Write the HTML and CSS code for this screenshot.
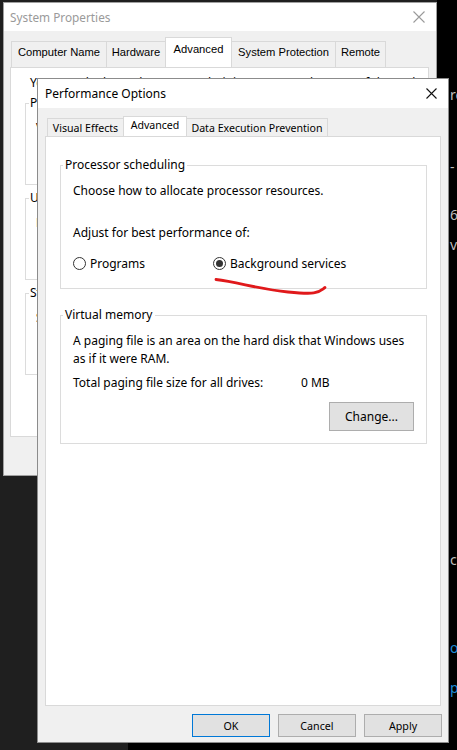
FILE: index.html
```html
<!DOCTYPE html>
<html>
<head>
<meta charset="utf-8">
<link rel="stylesheet" href="styles.css">
</head>
<body>
<div class="dark-top"></div>
<div class="dark-bottom"></div>

<div class="bgtext">
  <div class="frag g1">re</div>
  <div class="frag g2">-</div>
  <div class="frag g3">64</div>
  <div class="frag g4">va</div>
  <div class="frag g5">ce</div>
  <div class="frag g6 link">o</div>
  <div class="frag g7 link">p</div>
</div>

<div class="win sys">
  <div class="titlebar">
    <span>System Properties</span>
    <svg class="close" width="12" height="12" viewBox="0 0 12 12"><path d="M0.5 0.5 L11.5 11.5 M11.5 0.5 L0.5 11.5" stroke="#9a9a9a" stroke-width="1.1" fill="none"/></svg>
  </div>
  <div class="stabs">
    <div class="stab w1">Computer Name</div>
    <div class="stab w2">Hardware</div>
    <div class="stab w3 sel">Advanced</div>
    <div class="stab w4">System Protection</div>
    <div class="stab w5">Remote</div>
  </div>
  <div class="spanel">
    <div class="snote">You must be logged on as an Administrator to make most of these changes.</div>
    <fieldset class="sgb">
      <legend>Performance</legend>
      <div class="sgb-text">Visual effects, processor scheduling, memory usage, and virtual memory</div>
    </fieldset>
    <fieldset class="sgb">
      <legend>User Profiles</legend>
      <div class="sgb-text">Desktop settings related to your sign-in</div>
    </fieldset>
    <fieldset class="sgb">
      <legend>Startup and Recovery</legend>
      <div class="sgb-text">System startup, system failure, and debugging information</div>
    </fieldset>
  </div>
</div>

<div class="win perf">
  <div class="titlebar">
    <span>Performance Options</span>
    <svg class="close" width="11" height="11" viewBox="0 0 11 11"><path d="M0.5 0.5 L10.5 10.5 M10.5 0.5 L0.5 10.5" stroke="#111" stroke-width="1.1" fill="none"/></svg>
  </div>
  <div class="ptabs">
    <div class="ptab t1">Visual Effects</div>
    <div class="ptab t2 sel">Advanced</div>
    <div class="ptab t3">Data Execution Prevention</div>
  </div>
  <div class="ppanel">
    <fieldset class="gb">
      <legend>Processor scheduling</legend>
      <div class="gb-body">
        <div class="line">Choose how to allocate processor resources.</div>
        <div class="line adjust">Adjust for best performance of:</div>
        <div class="radios">
          <div class="radio r1"><span class="dot"></span><span>Programs</span></div>
          <div class="radio"><span class="dot on"></span><span>Background services</span></div>
        </div>
      </div>
    </fieldset>
    <fieldset class="gb vm">
      <legend>Virtual memory</legend>
      <div class="gb-body">
        <div class="line">A paging file is an area on the hard disk that Windows uses</div>
        <div class="line">as if it were RAM.</div>
        <div class="line total"><span class="tl">Total paging file size for all drives:</span><span>0 MB</span></div>
        <div class="btnrow"><div class="btn change">Change...</div></div>
      </div>
    </fieldset>
  </div>
  <div class="actions">
    <div class="btn act ok">OK</div>
    <div class="btn act">Cancel</div>
    <div class="btn act">Apply</div>
  </div>
</div>

<svg class="scribble" width="457" height="750" viewBox="0 0 457 750">
  <path d="M216 279.5 C 238 282, 258 289, 288 292 S 318 292.5, 325 287.5" stroke="#e0191b" stroke-width="2.8" fill="none" stroke-linecap="round"/>
</svg>
</body>
</html>
```

FILE: styles.css
```css
* { box-sizing: border-box; }
html, body { margin: 0; padding: 0; }
body {
  width: 457px;
  height: 750px;
  overflow: hidden;
  position: relative;
  background: #000;
  font-family: "Noto Sans", "Open Sans", sans-serif;
  font-size: 12px;
  color: #000;
}

.dark-top { position: absolute; left: 0; top: 0; width: 437px; height: 476px; background: #1f1f1f; }
.dark-bottom { position: absolute; left: 0; top: 476px; width: 128px; height: 274px; background: #1f1f1f; }

/* background window fragments on the right */
.bgtext {
  position: absolute;
  left: 449px;
  top: 0;
  width: 8px;
  height: 750px;
  overflow: hidden;
  font-size: 14px;
  line-height: 20px;
  color: #bdbdbd;
}
.frag { height: 20px; white-space: nowrap; padding-left: 1px; }
.g1 { margin-top: 85px; }
.g2 { margin-top: 52px; }
.g3 { margin-top: 28px; }
.g4 { margin-top: 10px; }
.g5 { margin-top: 295px; }
.g6 { margin-top: 68px; }
.g7 { margin-top: 20px; }
.link { color: #1e8ad6; }

/* windows */
.win { position: absolute; background: #f0f0f0; }
.titlebar {
  background: #fff;
  display: flex;
  align-items: center;
  justify-content: space-between;
}
.close { display: block; }

/* System Properties */
.sys {
  left: 3px;
  top: 2px;
  width: 434px;
  height: 474px;
  border: 1px solid #a0a0a0;
}
.sys .titlebar {
  height: 28px;
  padding: 0 11px 0 6px;
  font-size: 11.8px;
  color: #9a9a9a;
}
.stabs {
  display: flex;
  align-items: flex-end;
  height: 30px;
  margin: 6px 0 0 7px;
}
.stab {
  height: 26px;
  display: flex;
  align-items: center;
  justify-content: center;
  padding-bottom: 5px;
  border: 1px solid #d9d9d9;
  border-bottom: none;
  border-right: none;
  background: #f0f0f0;
  font-family: "Liberation Sans", Arial, sans-serif;
  font-size: 11.2px;
  color: #000;
}
.stab.sel { height: 30px; background: #fff; border-right: 1px solid #d9d9d9; padding-bottom: 8px; }
.stab.sel + .stab { border-left: none; }
.w1 { width: 95px; }
.w2 { width: 59px; }
.w3 { width: 67px; }
.w4 { width: 103px; }
.w5 { width: 51px; border-right: 1px solid #d9d9d9; }
.spanel {
  margin-left: 6px;
  width: 419px;
  height: 370px;
  background: #fff;
  border: 1px solid #d9d9d9;
  padding: 7px 0 0 19px;
  font-family: "Noto Sans", sans-serif;
  font-size: 12px;
  overflow: hidden;
}
.snote { line-height: 16px; white-space: nowrap; }
.sgb {
  margin: 6px 0 0 -5px;
  padding: 0 0 0 3px;
  width: 390px;
  height: 89px;
  border: 1px solid #dcdcdc;
  min-width: 0;
}
.sgb:first-of-type { margin-top: 5px; }
.sgb legend { padding: 0 1px; line-height: 14px; font-size: 12px; }
.sgb-text { margin: 10px 0 0 7px; line-height: 16px; white-space: nowrap; color: #000; }

/* Performance Options */
.perf {
  left: 37px;
  top: 78px;
  width: 412px;
  height: 665px;
  border: 1px solid #8c8c8c;
  display: flex;
  flex-direction: column;
}
.perf .titlebar {
  height: 29px;
  padding: 0 11px 0 7px;
  font-size: 12px;
  color: #000;
}
.ptabs {
  display: flex;
  align-items: flex-end;
  height: 20px;
  margin: 8px 0 0 9px;
}
.ptab {
  height: 18px;
  display: flex;
  align-items: center;
  justify-content: center;
  border: 1px solid #d9d9d9;
  border-bottom: none;
  background: #f0f0f0;
  font-size: 10.6px;
  white-space: nowrap;
}
.ptab.sel { height: 20px; background: #fff; padding-bottom: 3px; }
.t1 { width: 76px; border-right: none; }
.t2 { width: 64px; }
.t3 { width: 141px; border-left: none; }

.ppanel {
  margin-left: 7px;
  width: 396px;
  height: 570px;
  background: #fff;
  border: 1px solid #d9d9d9;
  padding: 20px 0 0 14px;
}
.gb {
  margin: 0;
  padding: 0 0 0 2px;
  width: 367px;
  border: 1px solid #dcdcdc;
  min-width: 0;
}
.gb legend { padding: 0 2px; font-size: 12px; line-height: 16px; }
.gb.vm { margin-top: 18px; }
.gb-body { padding: 9px 12px 16px 10px; }
.vm .gb-body { padding-bottom: 12px; }
.line { line-height: 18px; white-space: nowrap; }
.adjust { margin-top: 24px; }
.radios { display: flex; margin-top: 12px; height: 18px; align-items: center; }
.radio { display: flex; align-items: center; gap: 4px; }
.r1 { width: 140px; }
.dot {
  width: 13px;
  height: 13px;
  border-radius: 50%;
  border: 1px solid #333;
  background: #fff;
  display: flex;
  align-items: center;
  justify-content: center;
}
.dot.on::after {
  content: "";
  width: 7px;
  height: 7px;
  border-radius: 50%;
  background: #333;
}
.total { display: flex; margin-top: 6px; }
.tl { width: 228px; }
.btnrow { display: flex; justify-content: flex-end; margin-top: 10px; }
.btn {
  background: #e1e1e1;
  border: 1px solid #adadad;
  display: flex;
  align-items: center;
  justify-content: center;
}
.change { width: 85px; height: 29px; font-size: 12px; }
.actions {
  display: flex;
  justify-content: flex-end;
  gap: 8px;
  margin-top: 8px;
  padding-right: 6px;
}
.act { width: 78px; height: 23px; font-size: 10.7px; }
.ok { border-color: #0078d7; }

.scribble { position: absolute; left: 0; top: 0; pointer-events: none; }
```
